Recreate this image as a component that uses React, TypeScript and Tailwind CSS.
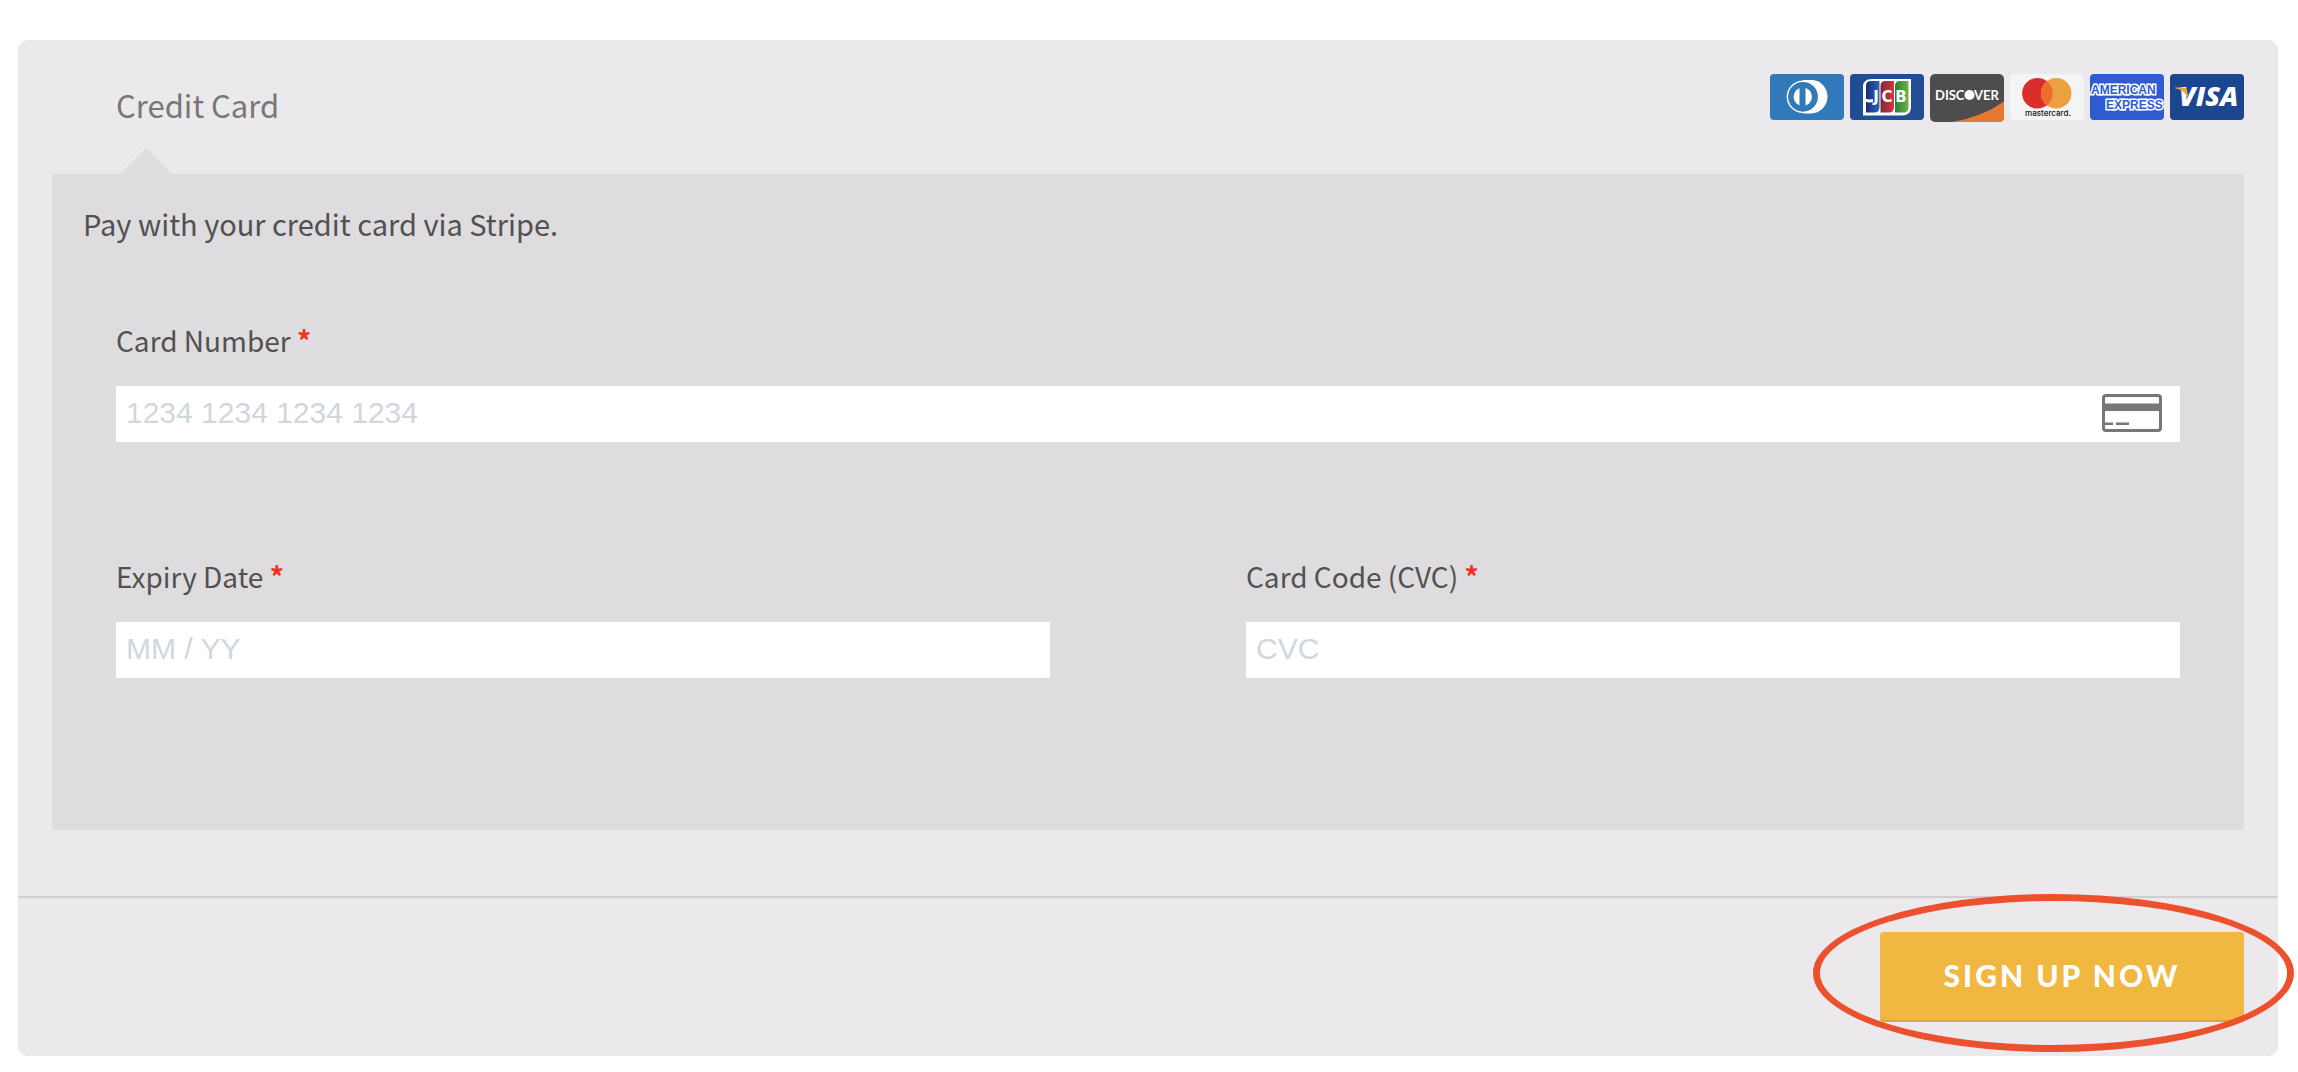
import type { ReactNode } from 'react';

function DinersIcon() {
  return (
    <svg role="img" aria-label="Diners Club" className="h-[46px] w-[74px]" viewBox="0 0 74 46">
      <rect width="74" height="46" rx="4" fill="#3279b9" />
      <path d="M33 6h8c9.500 0 16.500 7.500 16.500 16.800S50 39.500 41 39.500h-8z" fill="#fff" />
      <circle cx="33" cy="22.800" r="15.600" fill="#3279b9" stroke="#fff" strokeWidth="1.400" />
      <circle cx="32.800" cy="22.800" r="9.200" fill="#fff" />
      <rect x="29.500" y="12" width="6" height="22" fill="#3279b9" />
    </svg>
  );
}

function JcbIcon() {
  return (
    <svg role="img" aria-label="JCB" className="h-[46px] w-[74px]" viewBox="0 0 74 46">
      <defs>
        <linearGradient id="jcb-blue">
          <stop offset="0" stopColor="#1d2a78" />
          <stop offset="1" stopColor="#2a67b8" />
        </linearGradient>
        <linearGradient id="jcb-red">
          <stop offset="0" stopColor="#7c2a36" />
          <stop offset="1" stopColor="#d63446" />
        </linearGradient>
        <linearGradient id="jcb-green">
          <stop offset="0" stopColor="#23822f" />
          <stop offset="1" stopColor="#72b447" />
        </linearGradient>
      </defs>
      <rect width="74" height="46" rx="4" fill="#204d93" />
      <path d="M22 5h39v28q0 8.500-9 8.500H13V13q0-8 9-8z" fill="#fff" />
      <path d="M21 7h8.500v26q0 5.500-5 5.500H16V12q0-5 5-5z" fill="url(#jcb-blue)" />
      <path d="M35.500 7H44v26q0 5.500-5 5.500h-8.500V12q0-5 5-5z" fill="url(#jcb-red)" />
      <path d="M50 7h8.500v26q0 5.500-5 5.500H45V12q0-5 5-5z" fill="url(#jcb-green)" />
      <g fill="#fff" fontFamily="DejaVu Sans, sans-serif" fontWeight="700" fontSize="15" textAnchor="middle">
        <path d="M15 24.500q4 1.500 8 .500v3q-4 1-8-.500z" />
        <text x="26" y="28">J</text>
        <text x="37" y="28">C</text>
        <text x="51" y="28">B</text>
      </g>
    </svg>
  );
}

function DiscoverIcon() {
  return (
    <svg role="img" aria-label="Discover" className="h-12 w-[74px]" viewBox="0 0 74 48">
      <rect width="74" height="48" rx="5" fill="#4d4d4d" />
      <path d="M22 48Q52 43 74 27.500V43q0 5-5 5z" fill="#e57832" />
      <g fill="#fff" fontFamily="Lato, sans-serif" fontWeight="700" fontSize="13">
        <text x="5" y="25.500">DISC</text>
        <circle cx="39.500" cy="21" r="5" />
        <text x="44" y="25.500">VER</text>
      </g>
    </svg>
  );
}

function MastercardIcon() {
  return (
    <svg role="img" aria-label="Mastercard" className="h-[46px] w-[74px]" viewBox="0 0 74 46">
      <rect width="74" height="46" rx="4" fill="#f4f4f4" />
      <circle cx="27.400" cy="19.300" r="15.300" fill="#d92e2b" />
      <circle cx="46.200" cy="19.300" r="15.300" fill="#eba140" />
      <path d="M36.800 7.200a15.300 15.300 0 0 1 0 24.200a15.300 15.300 0 0 1 0-24.200z" fill="#ee6c2c" />
      <text x="38" y="42" textAnchor="middle" fontFamily="Inter, sans-serif" fontWeight="500" fontSize="8" fill="#111">
        mastercard.
      </text>
    </svg>
  );
}

function AmexIcon() {
  return (
    <svg role="img" aria-label="American Express" className="h-[46px] w-[74px] overflow-hidden" viewBox="0 0 74 46">
      <rect width="74" height="46" rx="4" fill="#2f5bd0" />
      <g
        fontFamily="Liberation Sans, sans-serif"
        fontWeight="700"
        fontSize="12"
        fill="#2f5bd0"
        stroke="#fff"
        strokeWidth="3"
        paintOrder="stroke"
      >
        <text x="1" y="20">AMERICAN</text>
        <text x="16" y="35">EXPRESS</text>
      </g>
    </svg>
  );
}

function VisaIcon() {
  return (
    <svg role="img" aria-label="Visa" className="h-[46px] w-[74px]" viewBox="0 0 74 46">
      <rect width="74" height="46" rx="4" fill="#1c468f" />
      <text x="9" y="32" fontFamily="Open Sans, sans-serif" fontStyle="italic" fontWeight="800" fontSize="27" fill="#fff">
        VISA
      </text>
      <path d="M5 13.500h9q2.500 0 3 2.500l1.500 8Q14 16 5 14.200z" fill="#eba63c" />
    </svg>
  );
}

function CardOutline() {
  return (
    <svg aria-hidden="true" className="h-[38px] w-[60px] shrink-0" viewBox="0 0 60 38">
      <rect x="1.500" y="1.500" width="57" height="35" rx="2.500" fill="none" stroke="#76777b" strokeWidth="3" />
      <path d="M2 9.500h56v7.500H2zM3 28.500h8v2.500H3zM14 28.500h13v2.500H14z" fill="#76777b" />
    </svg>
  );
}

type FieldProps = {
  id: string;
  label: string;
  placeholder: string;
  autoComplete: string;
  icon?: ReactNode;
};

function Field({ id, label, placeholder, autoComplete, icon }: FieldProps) {
  return (
    <div className="flex flex-1 flex-col gap-7">
      <label htmlFor={id} className="text-[28px] leading-9 text-[#515151]">
        {label} <span className="font-bold text-[#ee3124]">*</span>
      </label>
      <div className="flex h-14 items-center bg-white pr-[18px] pb-0.5 pl-[10px]">
        <input
          id={id}
          type="text"
          inputMode="numeric"
          autoComplete={autoComplete}
          placeholder={placeholder}
          className="h-full min-w-0 flex-1 bg-transparent font-['Liberation_Sans',sans-serif] text-[30px] text-[#515151] outline-none placeholder:text-[#cfd7df]"
        />
        {icon}
      </div>
    </div>
  );
}

export default function App() {
  return (
    <main className="overflow-x-hidden bg-white pt-10 pr-5 pb-4 pl-[18px] font-['Noto_Sans_CJK_SC',sans-serif]">
      <form className="rounded-[10px] bg-[#ebe9eb]" onSubmit={(e) => e.preventDefault()}>
        <section className="px-[34px] pt-[34px] pb-[66px]">
          <header className="flex h-[100px] items-start justify-between pl-16">
            <h2 className="pt-1 text-[31px] leading-[54px] text-[#777777]">Credit Card</h2>
            <div className="flex gap-1.5">
              <DinersIcon />
              <JcbIcon />
              <DiscoverIcon />
              <MastercardIcon />
              <AmexIcon />
              <VisaIcon />
            </div>
          </header>

          <div className="relative rounded bg-[#dedcde] px-[31px] pt-7 pb-[152px]">
            <svg
              aria-hidden="true"
              className="absolute bottom-full left-[68px] h-[26px] w-[52px]"
              viewBox="0 0 52 26"
            >
              <path d="M0 26L26 0l26 26z" fill="#dedcde" />
            </svg>
            <p className="text-[29px] leading-[42px] text-[#515151]">Pay with your credit card via Stripe.</p>
            <div className="flex flex-col gap-[116px] px-[33px] pt-[78px]">
              <Field
                id="card-number"
                label="Card Number"
                placeholder="1234 1234 1234 1234"
                autoComplete="cc-number"
                icon={<CardOutline />}
              />
              <div className="flex gap-[196px]">
                <Field id="card-expiry" label="Expiry Date" placeholder="MM / YY" autoComplete="cc-exp" />
                <Field id="card-cvc" label="Card Code (CVC)" placeholder="CVC" autoComplete="cc-csc" />
              </div>
            </div>
          </div>
        </section>

        <footer className="flex justify-end border-t-2 border-[#d1ced2] px-[34px] py-[34px]">
          <div className="relative">
            <button
              type="submit"
              className="h-[90px] w-[364px] rounded border-b-2 border-[#dba838] bg-[#f0b840] pb-0.5 font-['Lato',sans-serif] text-[30px] font-black tracking-widest text-white uppercase"
            >
              Sign up now
            </button>
            <span
              aria-hidden="true"
              className="pointer-events-none absolute -top-[38px] -right-[50px] -bottom-[30px] -left-[67px] rounded-[50%] border-[7px] border-[#ec512d]"
            />
          </div>
        </footer>
      </form>
    </main>
  );
}
